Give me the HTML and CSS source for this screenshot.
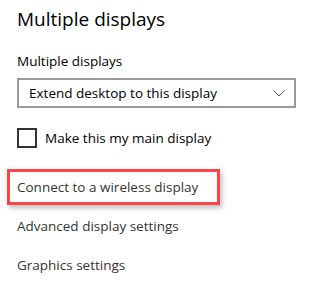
FILE: index.html
```html
<!DOCTYPE html>
<html>
<head>
<meta charset="utf-8">
<link rel="stylesheet" href="styles.css">
</head>
<body>
<div class="page">
  <h1 class="title">Multiple displays</h1>
  <div class="label">Multiple displays</div>
  <div class="select">
    <span class="select-text">Extend desktop to this display</span>
    <svg class="chev" width="12" height="7" viewBox="0 0 12 7"><path d="M0.5 0.5 L6 6 L11.5 0.5" fill="none" stroke="#555" stroke-width="1"/></svg>
  </div>
  <div class="check">
    <span class="box"></span>
    <span class="check-text">Make this my main display</span>
  </div>
  <div class="links">
    <div class="link highlight">Connect to a wireless display</div>
    <div class="link">Advanced display settings</div>
    <div class="link">Graphics settings</div>
  </div>
</div>
</body>
</html>
```
FILE: styles.css
```css
html, body {
  margin: 0;
  padding: 0;
  background: #fff;
}
.page {
  padding: 5px 0 0 17px;
  font-family: "Open Sans", "Noto Sans", sans-serif;
  color: #000;
}
.title {
  margin: 0;
  font-size: 19px;
  font-weight: 400;
  line-height: 28px;
}
.label {
  margin-top: 18px;
  font-size: 13.5px;
  line-height: 20px;
}
.select {
  margin-top: 7px;
  box-sizing: border-box;
  width: 279px;
  height: 30px;
  border: 2px solid #999;
  display: flex;
  align-items: center;
  justify-content: space-between;
  padding: 0 9px 0 10px;
}
.select-text {
  font-size: 13.5px;
  line-height: 20px;
}
.chev {
  display: block;
}
.check {
  margin-top: 20px;
  display: flex;
  align-items: center;
  gap: 8px;
}
.box {
  box-sizing: border-box;
  width: 20px;
  height: 20px;
  border: 2px solid #333;
}
.check-text {
  font-size: 13.5px;
  line-height: 20px;
}
.links {
  margin-top: 21px;
}
.link {
  font-size: 13.5px;
  line-height: 20px;
  color: #333;
}
.link.highlight {
  margin-left: -10px;
  width: 213px;
  box-sizing: border-box;
  border: 3px solid #ff4448;
  padding: 5px 7px 5px;
  box-shadow: 2px 3px 5px rgba(0,0,0,0.25);
}
.link:nth-child(2) {
  margin-top: 11px;
}
.link:nth-child(3) {
  margin-top: 19px;
}
```
